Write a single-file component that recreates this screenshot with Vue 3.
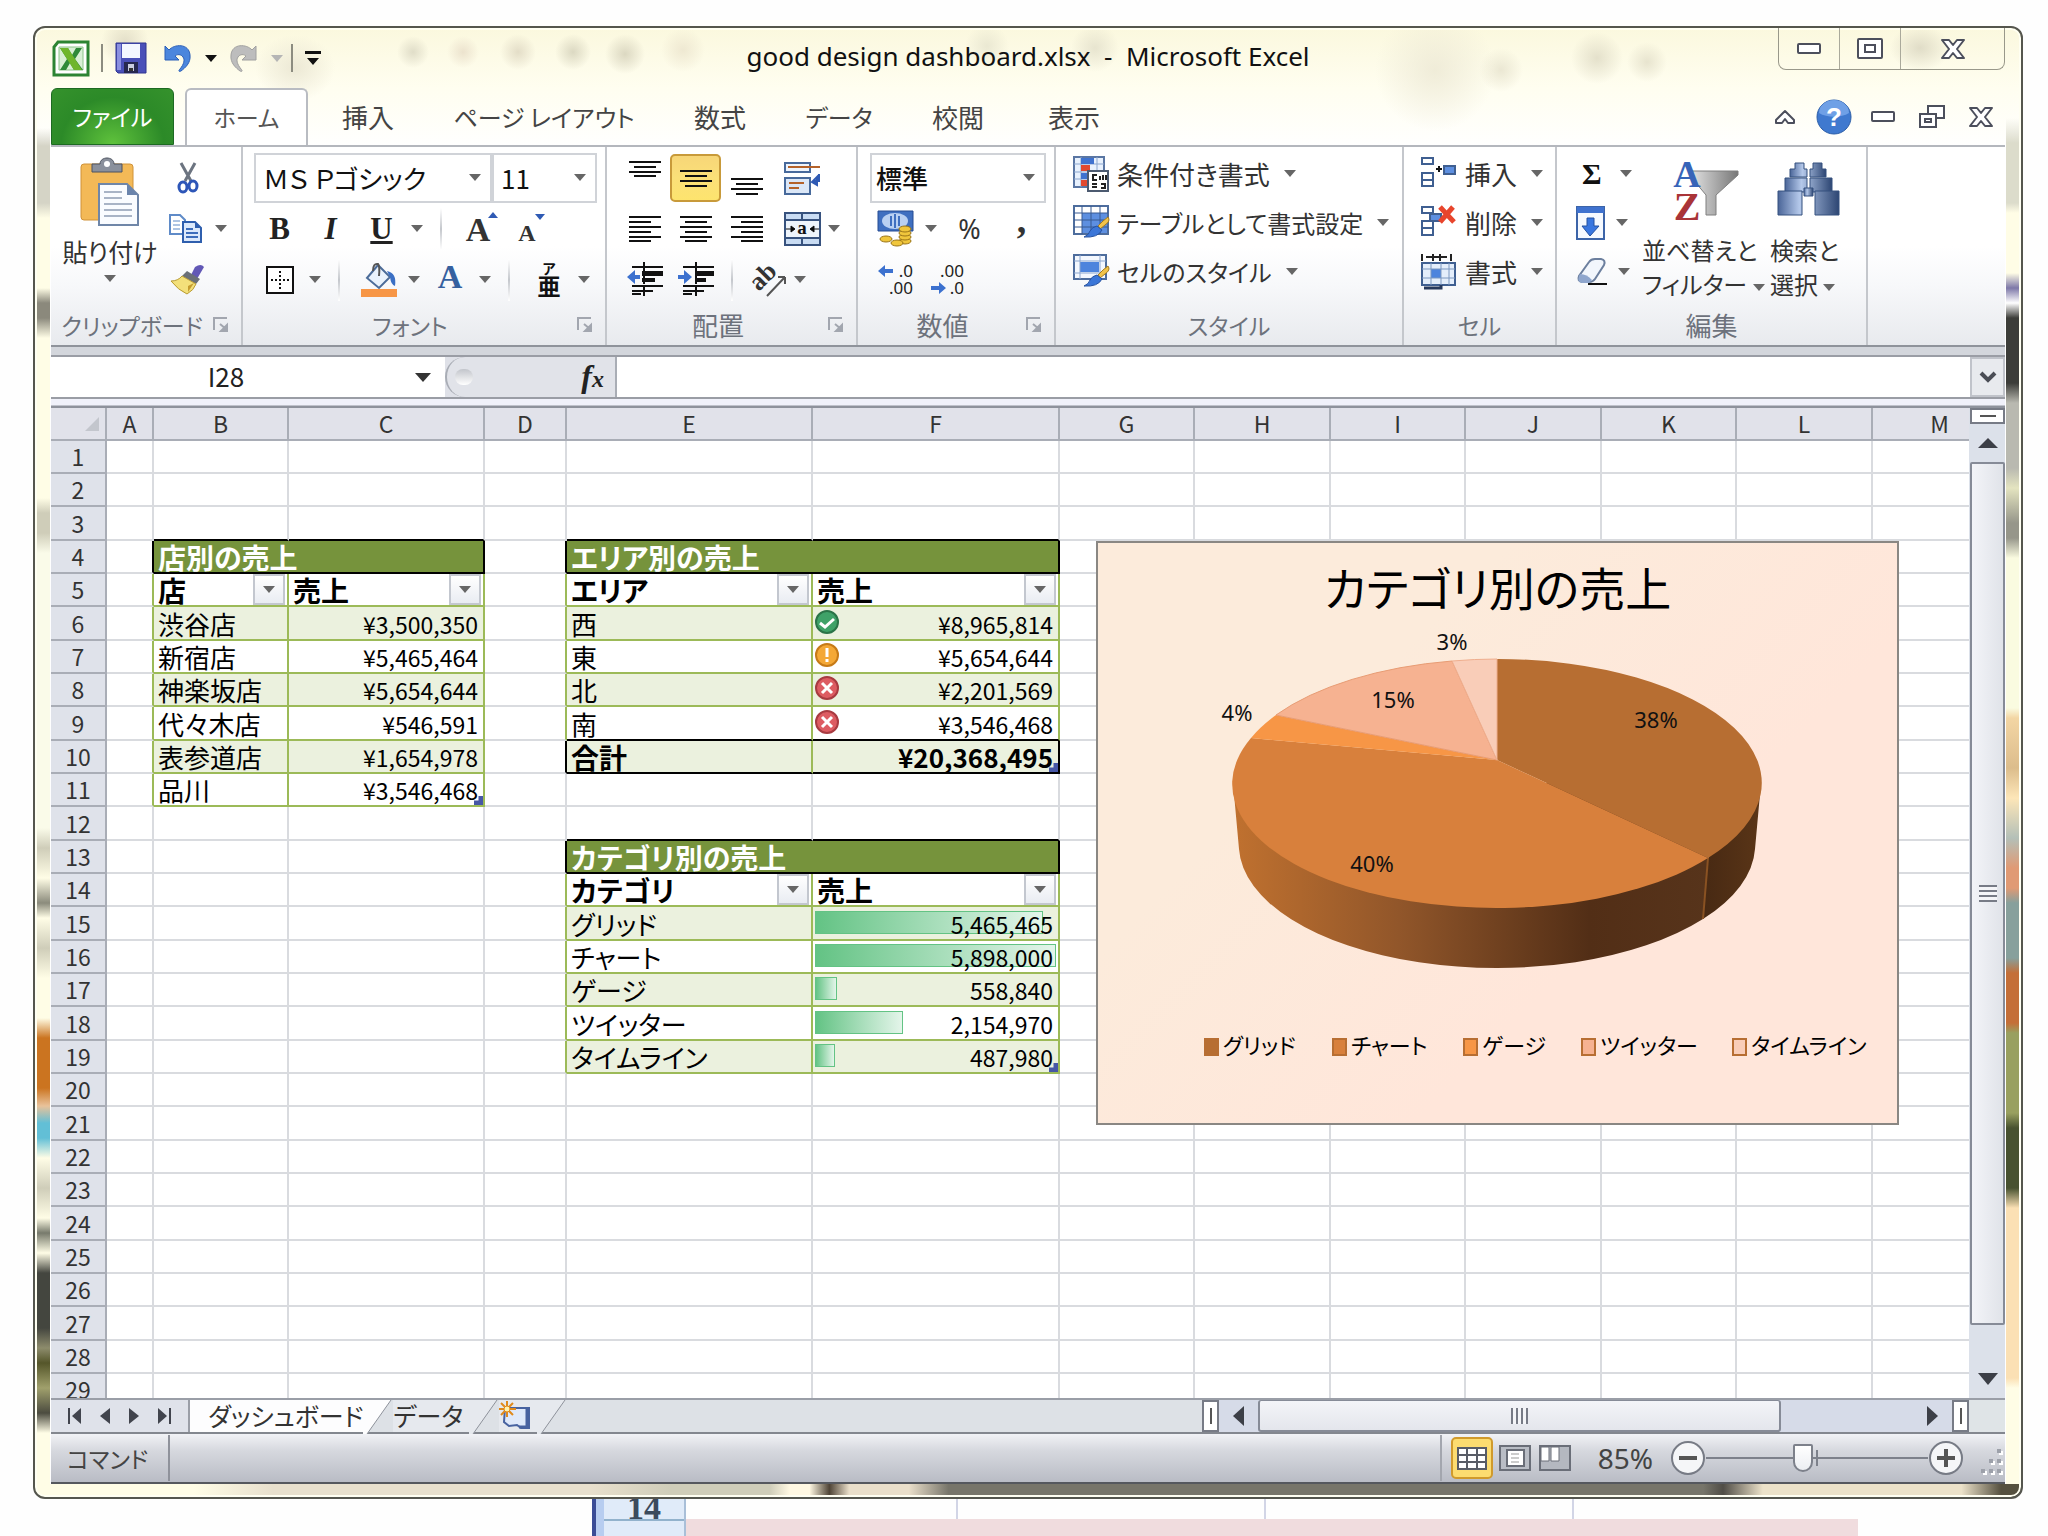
<script setup>
import { h } from 'vue'

const glyphs = {
  excel: '<path d="M5 1H35V34H1V6z" fill="#fff" stroke="#2c8433" stroke-width="3"/><path d="M6 6H30V29H6z" fill="#d9efd6" stroke="#8cc48a"/><path d="M7 7h8l4 7 4-7h6l-7 11 8 11h-9l-4-7-4 7H7l7-11z" fill="#2f8a3a"/><path d="M7 7h8l14 22h-8z" fill="#6fb52c"/>',
  save: '<path d="M1 1H31V31H3L1 29z" fill="#4a50b8" stroke="#2f3590"/><path d="M2 2h4v26H2z" fill="#8b90e0"/><path d="M7 2H25V16H7z" fill="#f4f7ff"/><path d="M9 20H23V31H9z" fill="#26284f"/><path d="M13 22h6v7h-6z" fill="#c9ccdf"/><path d="M14 26h4v3h-4z" fill="#333"/>',
  undo: '<path d="M1 3l4 4C10 1 25 0 26 12c1 8-5 13-9 16-2 1-3 0-1-2 4-5 5-9 3-12-2-3-6-3-8-1l4 4H1z" fill="#4b86dd" stroke="#2b5fb8"/>',
  redo: '<path d="M26 3l-4 4C17 1 2 0 1 12c-1 8 5 13 9 16 2 1 3 0 1-2-4-5-5-9-3-12 2-3 6-3 8-1l-4 4h14z" fill="#bdbdbd" stroke="#a0a0a0"/>',
  more: '<path d="M0 0H16V3H0z M2 7H14L8 14z" fill="#111"/>',
  min: '<rect x="1" y="1" width="22" height="9" rx="1" fill="#fff" stroke="#4c4f5c" stroke-width="2"/>',
  max: '<rect x="1" y="1" width="24" height="19" rx="1" fill="#fff" stroke="#4c4f5c" stroke-width="2"/><rect x="8" y="7" width="10" height="7" fill="#fff" stroke="#4c4f5c" stroke-width="2"/>',
  close: '<path d="M1 1h7l4 5 4-5h7l-7 9 7 9h-7l-4-5-4 5H1l7-9z" fill="#fff" stroke="#4c4f5c" stroke-width="2" stroke-linejoin="round"/>',
  restore: '<path d="M9 1H25V13H9z" fill="#fff" stroke="#4c4f5c" stroke-width="2"/><path d="M1 9H17V22H1z" fill="#fff" stroke="#4c4f5c" stroke-width="2"/><path d="M6 14h6v3H6z" fill="#fff" stroke="#4c4f5c" stroke-width="2"/>',
  caret: '<path d="M1 14V11L10 2L19 11V14H13L10 10L7 14z" fill="#fff" stroke="#4c4f5c" stroke-width="2" stroke-linejoin="round"/>',
  help: '<circle cx="18" cy="18" r="17" fill="#3f79cf" stroke="#2c5ea8"/><path d="M3 14a15 13 0 0 1 30 0c-8 5-22 5-30 0z" fill="#6fa0e6"/><text x="18" y="27" text-anchor="middle" font-family="Liberation Sans" font-weight="bold" font-size="26" fill="#fff">?</text>',
  paste: '<rect x="1" y="6" width="52" height="56" rx="3" fill="#f3b957" stroke="#d09238"/><path d="M12 6h8c0-8 14-8 14 0h8v8H12z" fill="#8a909c" stroke="#4d5360"/><circle cx="27" cy="6" r="3" fill="#fff"/><path d="M19 26H47L58 37V67H19z" fill="#fafcff" stroke="#6f86a8" stroke-width="2"/><path d="M47 26V37H58z" fill="#6a84ac"/><path d="M24 34h18M24 40h18M24 46h28M24 52h28M24 58h28" stroke="#a9b4c6" stroke-width="2"/>',
  cut: '<path d="M4 1L14 19M18 1L8 19" stroke="#6c7480" stroke-width="3"/><ellipse cx="6" cy="25" rx="4" ry="5" fill="none" stroke="#2d56b8" stroke-width="3"/><ellipse cx="16" cy="24" rx="4" ry="5" fill="none" stroke="#2d56b8" stroke-width="3"/>',
  copy: '<path d="M1 1H11L16 6V20H1z" fill="#fff" stroke="#5f8bc8" stroke-width="2"/><path d="M4 7h7M4 11h7M4 15h7" stroke="#5f8bc8"/><path d="M14 8H26L32 14V28H14z" fill="#dce9fb" stroke="#2f5fae" stroke-width="2"/><path d="M26 8V14H32z" fill="#2f5fae"/><path d="M17 15h7M17 19h12M17 23h12" stroke="#3d6dbb" stroke-width="2"/>',
  brush: '<path d="M25 3q6-4 9 0l-7 12-6-4z" fill="#6258b6"/><path d="M17 7L30 15 26 20 12 12z" fill="#6b7077"/><path d="M12 12L26 20Q24 26 17 30 8 26 1 17 8 17 12 12z" fill="#f3e07a" stroke="#b99b32"/><path d="M18 22l6-3-6 9z" fill="#c59d2f"/>',
  border: '<path d="M1 1H27V27H1z" fill="#fff" stroke="#111" stroke-width="2"/><path d="M14 5V24M5 14H24" stroke="#111" stroke-width="2" stroke-dasharray="2 2"/>',
  fill: '<path d="M0 26H36V34H0z" fill="#f79646"/><path d="M17 2L29 14 18 25 6 15z" fill="#e9f2fc" stroke="#4c6c99" stroke-width="2"/><path d="M12 8q0-8 5-7 2 2 1 12" fill="none" stroke="#555" stroke-width="2"/><path d="M26 8q10 2 8 15-4-1-5-9z" fill="#3b6fc4"/>',
  fontcolor: '<text x="13" y="25" text-anchor="middle" font-family="Liberation Serif" font-weight="bold" font-size="34" fill="#35609f">A</text>',
  grow: '<text x="15" y="30" text-anchor="middle" font-family="Liberation Serif" font-weight="bold" font-size="34" fill="#333">A</text><path d="M25 7L30 1L35 7z" fill="#2f5ab4"/>',
  shrink: '<text x="11" y="30" text-anchor="middle" font-family="Liberation Serif" font-weight="bold" font-size="24" fill="#333">A</text><path d="M19 3H29L24 9z" fill="#2f5ab4"/>',
  ruby: '<text x="13" y="12" text-anchor="middle" font-family="Noto Sans CJK JP" font-weight="bold" font-size="14" fill="#111">ア</text><text x="13" y="33" text-anchor="middle" font-family="Noto Sans CJK JP" font-weight="bold" font-size="23" fill="#111">亜</text>',
  vtop: '<path d="M0 3H32M5 8H27M0 13H32M5 17H27" stroke="#111" stroke-width="2"/>',
  vmid: '<path d="M0 12H32M5 17H27M0 22H32M5 27H27" stroke="#111" stroke-width="2"/>',
  vbot: '<path d="M0 20H32M5 25H27M0 30H32M5 35H27" stroke="#111" stroke-width="2"/>',
  hleft: '<path d="M0 7H32M0 12H22M0 17H32M0 22H22M0 27H32M0 31H22" stroke="#111" stroke-width="2"/>',
  hmid: '<path d="M0 7H32M5 12H27M0 17H32M5 22H27M0 27H32M5 31H27" stroke="#111" stroke-width="2"/>',
  hright: '<path d="M0 7H32M10 12H32M0 17H32M10 22H32M0 27H32M10 31H32" stroke="#111" stroke-width="2"/>',
  wrap: '<path d="M1 2H26V11H1z" fill="#eef4fc" stroke="#47699b" stroke-width="2"/><path d="M4 6H36" stroke="#b4622a" stroke-width="2"/><path d="M1 17H26V33H1z" fill="#dbe7f7" stroke="#47699b" stroke-width="2"/><path d="M5 22H20M5 27H15" stroke="#b4622a" stroke-width="2"/><path d="M35 13V20H30M33 16L28 21l5 3z" fill="#2f5ab4" stroke="#2f5ab4" stroke-width="2"/>',
  merge: '<path d="M1 1H36V33H1z" fill="#c9dcf3" stroke="#37527e" stroke-width="2"/><path d="M1 8H36M1 26H36M18 1V8M18 26V33" stroke="#37527e" stroke-width="2"/><path d="M2 9H35V25H2z" fill="#eef4fb"/><path d="M2 17H9M28 17H35M7 14l4 3-4 3zM30 14l-4 3 4 3z" stroke="#111" stroke-width="1"/><text x="18" y="22" text-anchor="middle" font-family="Liberation Serif" font-weight="bold" font-size="19" fill="#111">a</text>',
  outdent: '<path d="M5 5H36M5 24H36M5 29H26M5 32H14" stroke="#111" stroke-width="2"/><path d="M15 9H36V14H15zM15 16H28V20H15z" fill="#111"/><path d="M17 0V35" stroke="#111" stroke-width="2" stroke-dasharray="4 2"/><path d="M0 15L8 8V13H13V17H8V22z" fill="#3c71cf"/>',
  indent: '<path d="M5 5H36M5 24H36M5 29H26M5 32H14" stroke="#111" stroke-width="2"/><path d="M17 9H36V14H17zM17 16H28V20H17z" fill="#111"/><path d="M18 0V35" stroke="#111" stroke-width="2" stroke-dasharray="4 2"/><path d="M14 15L6 8V13H0V17H6V22z" fill="#3c71cf"/>',
  orient: '<g transform="rotate(-45 16 16)"><text x="14" y="20" text-anchor="middle" font-family="Liberation Serif" font-weight="bold" font-size="26" fill="#333">ab</text></g><path d="M16 34L34 15M34 15H27M34 15V22" fill="none" stroke="#555" stroke-width="2"/>',
  money: '<path d="M1 1H36V21H1z" fill="#3f6fc0" stroke="#274d92"/><ellipse cx="18" cy="11" rx="13" ry="8" fill="#b9d0f2"/><path d="M14 6v10M22 6v10M18 4v14" stroke="#3f6fc0" stroke-width="2"/><g fill="#f0c63c" stroke="#9a7416"><ellipse cx="28" cy="31" rx="6" ry="3"/><ellipse cx="28" cy="27" rx="6" ry="3"/><ellipse cx="28" cy="23" rx="6" ry="3"/><ellipse cx="28" cy="19" rx="6" ry="3"/><ellipse cx="9" cy="29" rx="6" ry="3"/><ellipse cx="20" cy="33" rx="6" ry="3"/></g>',
  incdec: '<text x="35" y="13" text-anchor="end" font-family="Noto Sans" font-size="17" fill="#222">.0</text><text x="35" y="30" text-anchor="end" font-family="Noto Sans" font-size="17" fill="#222">.00</text><path d="M0 7L7 1V5H15V9H7V13z" fill="#3c71cf"/>',
  decdec: '<text x="35" y="13" text-anchor="end" font-family="Noto Sans" font-size="17" fill="#222">.00</text><text x="35" y="30" text-anchor="end" font-family="Noto Sans" font-size="17" fill="#222">.0</text><path d="M17 24L10 18V22H2V26H10V30z" fill="#3c71cf"/>',
  cond: '<path d="M1 1H31V31H1z" fill="#e8f1fd" stroke="#5a76a3" stroke-width="2"/><path d="M8 1V31M1 8H31M1 16H31M1 23H31M24 1V14" stroke="#8ba6cf"/><path d="M8 2H21V8H8z" fill="#3f72cf"/><path d="M8 9H17V15H8zM8 24H14V30H8z" fill="#e2492f"/><path d="M8 17H14V23H8z" fill="#3f72cf"/><path d="M15 15H35V35H15z" fill="#fff" stroke="#4c5a70" stroke-width="2"/><path d="M24 19H20V24H24M27 20V24M30 19V24M33 19V24M19 28H24M19 31H24M28 28H32V32H28" fill="none" stroke="#222" stroke-width="2"/>',
  tblfmt: '<path d="M1 1H35V29H1z" fill="#fff" stroke="#4e6d9d" stroke-width="2"/><path d="M9 8H34V28H9z" fill="#5d8fe0"/><path d="M1 8H35M1 15H35M1 22H35M9 1V29M18 1V29M27 1V29" stroke="#385a92" stroke-width="1"/><path d="M35 12q3 4-3 8l-5 4-2-3 5-5z" fill="#f1c34a" stroke="#a67c1d"/><path d="M24 21l5 4q-4 8-18 7 5-2 6-6 2-4 7-5z" fill="#3b76d8" stroke="#2753a2"/>',
  celfmt: '<path d="M1 1H33V25H1z" fill="#f4f8fe" stroke="#4e6d9d" stroke-width="2"/><path d="M7 8H26V18H7z" fill="#4d84dd"/><path d="M1 7H33M1 19H33M7 1V25M27 1V25" stroke="#8ba6cf"/><path d="M35 12q3 4-3 8l-5 4-2-3 5-5z" fill="#f1c34a" stroke="#a67c1d"/><path d="M24 21l5 4q-4 8-18 7 5-2 6-6 2-4 7-5z" fill="#3b76d8" stroke="#2753a2"/>',
  cins: '<g fill="#fff" stroke="#3f5f91" stroke-width="2"><path d="M1 2H12V8H1zM1 17H12V24H1zM1 24H12V30H1z"/><path d="M23 10H34V18H23z" fill="#5d8fe0"/></g><path d="M15 13H21M18 10V16" stroke="#111" stroke-width="2"/>',
  cdel: '<g fill="#fff" stroke="#3f5f91" stroke-width="2"><path d="M1 2H12V8H1zM1 16H12V23H1zM1 23H12V30H1z"/><path d="M9 9H20V16H9z" fill="#5d8fe0"/></g><path d="M19 2L33 17M32 2L19 17" stroke="#e8452c" stroke-width="5"/>',
  cfmt: '<path d="M1 0V7M30 0V7M5 3H26M12 0V7M19 0V7" stroke="#222" stroke-width="2"/><path d="M1 9H34V31H1z" fill="#e4eefb" stroke="#3f5f91" stroke-width="2"/><path d="M10 15H20V24H10z" fill="#4d84dd"/><path d="M1 15H34M1 24H34M10 9V31M20 9V31M28 9V31" stroke="#7d98c0"/><path d="M3 34H20V31" fill="none" stroke="#26395c" stroke-width="3"/>',
  down: '<path d="M1 1H28V33H1z" fill="#f5f9ff" stroke="#3c64a8" stroke-width="2"/><path d="M1 1H28V7H1z" fill="#3f72cf"/><path d="M11 12H18V20H23L14 30L6 20H11z" fill="#3876e0" stroke="#2350a0"/>',
  eraser: '<path d="M13 4q2-3 6-3h6q5 1 3 6l-9 14q-2 3-6 3H6q-5-1-3-6z" fill="#f2f6fc" stroke="#6c7f9e" stroke-width="2"/><path d="M4 16q7 0 12 6l-3 3H6q-5-1-3-7z" fill="#8fa6cd"/><path d="M12 26H31" stroke="#111" stroke-width="2"/>',
  sort: '<defs><linearGradient id="fn"><stop offset="0" stop-color="#e2e2e2"/><stop offset="1" stop-color="#777"/></linearGradient></defs><path d="M18 14H65V18L43 38V58H33V38L18 20z" fill="url(#fn)" stroke="#7f7f7f"/><text x="14" y="30" text-anchor="middle" font-family="Liberation Serif" font-weight="bold" font-size="38" fill="#3764b8">A</text><text x="14" y="63" text-anchor="middle" font-family="Liberation Serif" font-weight="bold" font-size="40" fill="#a93438">Z</text>',
  find: '<defs><linearGradient id="bn"><stop offset="0" stop-color="#4a6598"/><stop offset=".35" stop-color="#b4c8ea"/><stop offset="1" stop-color="#2d4673"/></linearGradient></defs><g transform="translate(0 5)" fill="url(#bn)" stroke="#34507f"><path d="M18 1h9v6h3v8H13V7h5zM36 1h9v6h4v8H33V7h3z"/><path d="M8 16H30V30H8zM33 16H55V30H33z"/><path d="M27 26H36V34H27z"/><path d="M1 29H25V53H1zM38 29H62V53H38z"/></g>',
  launch: '<path d="M1 13V1H14" fill="none" stroke="#a2a6af" stroke-width="2"/><path d="M7 7L13 12M14 8V14H8z" fill="#a2a6af" stroke="#a2a6af" stroke-width="2"/>',
  first: '<path d="M1 0H3V16H1zM14 0V16L5 8z" fill="#41444d"/>',
  prev: '<path d="M10 0V16L0 8z" fill="#41444d"/>',
  next: '<path d="M0 0V16L10 8z" fill="#41444d"/>',
  last: '<path d="M11 0H13V16H11zM0 0V16L9 8z" fill="#41444d"/>',
  newtab: '<path d="M6 8H30V28H22L18 25 10 26 5 22z" fill="#dfe9fa" stroke="#4863a0" stroke-width="2"/><path d="M28 9V27H20" fill="none" stroke="#4863a0" stroke-width="3"/><path d="M8 1V17M0 9H17M2 3L14 15M14 3L2 15" stroke="#e08a1c" stroke-width="2"/><circle cx="8" cy="9" r="3" fill="#fff3b0" stroke="#e08a1c"/>',
  vnormal: '<path d="M1 1H29V22H1z" fill="#fff" stroke="#585c66" stroke-width="2"/><path d="M1 8H29M1 15H29M10 1V22M20 1V22" stroke="#585c66" stroke-width="2"/>',
  vlayout: '<path d="M1 1H31V25H1z" fill="#b9bdc5" stroke="#6a6e78" stroke-width="2"/><path d="M8 5H25V21H8z" fill="#fff" stroke="#6a6e78" stroke-width="2"/><path d="M12 9H20M12 13H20M12 17H20" stroke="#999"/>',
  vbreak: '<path d="M1 1H31V25H1z" fill="#b4b8c0" stroke="#6a6e78" stroke-width="2"/><path d="M2 2H10V16H2zM12 2H20V16H12z" fill="#fff" stroke="#6a6e78"/>',
  minus: '<circle cx="18" cy="18" r="16" fill="#f5f6f8" stroke="#777b85" stroke-width="2"/><path d="M9 18H27" stroke="#555" stroke-width="4"/>',
  plus: '<circle cx="18" cy="18" r="16" fill="#f5f6f8" stroke="#777b85" stroke-width="2"/><path d="M9 18H27M18 9V27" stroke="#555" stroke-width="4"/>',
  ok: '<circle cx="12" cy="12" r="11" fill="#3fa268" stroke="#2b7448" stroke-width="2"/><path d="M5 13l5 4 9-8" fill="none" stroke="#fff" stroke-width="3"/>',
  warn: '<circle cx="12" cy="12" r="11" fill="#f4a836" stroke="#c67a17" stroke-width="2"/><path d="M12 5V14M12 16V19" stroke="#fff" stroke-width="3"/>',
  bad: '<circle cx="12" cy="12" r="11" fill="#dd5c62" stroke="#a83b41" stroke-width="2"/><path d="M7 7L17 17M17 7L7 17" stroke="#fff" stroke-width="3"/>',
  slant: '<path d="M0 0H28L4 34H0z" fill="#fdfdfe"/><path d="M28 0L4 34" stroke="#8e929b" stroke-width="1"/>',
  slant2: '<path d="M0 0H28L4 34H0z" fill="#e6e9ee"/><path d="M28 0L4 34" stroke="#8e929b" stroke-width="1"/>',
  grip: '<g fill="#fff"><path d="M18 2h4v4h-4zM10 12h4v4h-4zM18 12h4v4h-4zM2 22h4v4H2zM10 22h4v4h-4zM18 22h4v4h-4z"/></g><g fill="#9da1aa"><path d="M16 0h4v4h-4zM8 10h4v4H8zM16 10h4v4h-4zM0 20h4v4H0zM8 20h4v4H8zM16 20h4v4h-4z"/></g>',
}
const Icon = (p) => h('svg', { width: p.w, height: p.h, viewBox: `0 0 ${p.w} ${p.h}`, 'aria-hidden': 'true', innerHTML: glyphs[p.n] })
Icon.props = ['n', 'w', 'h']

const docTitle = 'good design dashboard.xlsx  -  Microsoft Excel'
const tabs = [['挿入', ''], ['ページ レイアウト', 'kana wide'], ['数式', ''], ['データ', 'kana data'], ['校閲', ''], ['表示', '']]
const styleCmds = [['cond', '条件付き書式', ''], ['tblfmt', 'テーブルとして書式設定', 'kana'], ['celfmt', 'セルのスタイル', 'kana']]
const cellCmds = [['cins', '挿入'], ['cdel', '削除'], ['cfmt', '書式']]

const cols = 'ABCDEFGHIJKLM'.split('')
const rows = Array.from({ length: 29 }, (_, i) => i + 1)
const cells = {
  B4: { title: '店別の売上' }, B5: { head: '店' }, C5: { head: '売上' },
  B6: { t: '渋谷店' }, C6: { num: '¥3,500,350' },
  B7: { t: '新宿店' }, C7: { num: '¥5,465,464' },
  B8: { t: '神楽坂店' }, C8: { num: '¥5,654,644' },
  B9: { t: '代々木店' }, C9: { num: '¥546,591' },
  B10: { t: '表参道店' }, C10: { num: '¥1,654,978' },
  B11: { t: '品川' }, C11: { num: '¥3,546,468', end: true },
  E4: { title: 'エリア別の売上' }, E5: { head: 'エリア' }, F5: { head: '売上' },
  E6: { t: '西' }, F6: { num: '¥8,965,814', mark: 'ok' },
  E7: { t: '東' }, F7: { num: '¥5,654,644', mark: 'warn' },
  E8: { t: '北' }, F8: { num: '¥2,201,569', mark: 'bad' },
  E9: { t: '南' }, F9: { num: '¥3,546,468', mark: 'bad' },
  E10: { t: '合計', bold: true }, F10: { num: '¥20,368,495', bold: true, end: true },
  E13: { title: 'カテゴリ別の売上' }, E14: { head: 'カテゴリ' }, F14: { head: '売上' },
  E15: { t: 'グリッド' }, F15: { num: '5,465,465', bar: 93 },
  E16: { t: 'チャート' }, F16: { num: '5,898,000', bar: 100 },
  E17: { t: 'ゲージ' }, F17: { num: '558,840', bar: 9 },
  E18: { t: 'ツイッター' }, F18: { num: '2,154,970', bar: 36 },
  E19: { t: 'タイムライン' }, F19: { num: '487,980', bar: 8, end: true },
}
const areas = [
  { c0: 1, c1: 2, r0: 4, r1: 11 },
  { c0: 4, c1: 5, r0: 4, r1: 10, total: true },
  { c0: 4, c1: 5, r0: 13, r1: 19 },
]
const cell = (r, c) => cells[cols[c] + r] || {}
const covered = (r, c) => c > 0 && !!cell(r, c - 1).title
function cellClass(r, c) {
  const out = []
  for (const a of areas) {
    const inRows = r >= a.r0 && r <= a.r1
    const inCols = c >= a.c0 && c <= a.c1
    const last = a.total && r === a.r1
    if (inRows && c >= a.c0 - 1 && c <= a.c1) {
      const outer = c === a.c0 - 1 || c === a.c1
      out.push(r === a.r0 || (last && outer) ? 'rk' : 'rg')
    }
    if (inCols && r >= a.r0 - 1 && r <= a.r1) {
      out.push(r <= a.r0 || last || (a.total && r === a.r1 - 1) ? 'bk' : 'bg')
    }
    if (inRows && inCols && r > a.r0 + 1 && (r - a.r0) % 2 === 0) out.push('band')
  }
  if (cell(r, c).title) out.push('title')
  return out
}
const legend = [['グリッド', '#b76e32'], ['チャート', '#d8803c'], ['ゲージ', '#f79646'], ['ツイッター', '#f6b291'], ['タイムライン', '#f9cdb8']]
</script>

<template>
  <div class="desktop">
    <main class="window">
      <header class="titlebar">
        <div class="qat">
          <Icon n="excel" w="36" h="35" />
          <i class="vline"></i>
          <button aria-label="上書き保存"><Icon n="save" w="32" h="32" /></button>
          <button aria-label="元に戻す"><Icon n="undo" w="28" h="30" /></button>
          <i class="dn black"></i>
          <button aria-label="やり直し"><Icon n="redo" w="28" h="30" /></button>
          <i class="dn pale"></i>
          <i class="vline"></i>
          <button aria-label="クイック アクセス ツール バーのカスタマイズ"><Icon n="more" w="16" h="14" /></button>
        </div>
        <h1>{{ docTitle }}</h1>
        <div class="winbtns">
          <button aria-label="最小化"><Icon n="min" w="24" h="11" /></button>
          <button aria-label="最大化"><Icon n="max" w="26" h="21" /></button>
          <button aria-label="閉じる" class="x"><Icon n="close" w="24" h="20" /></button>
        </div>
      </header>

      <nav class="tabs">
        <button class="file">ファイル</button>
        <button class="home">ホーム</button>
        <button v-for="t in tabs" :key="t[0]" class="tab" :class="t[1]">{{ t[0] }}</button>
        <div class="docbtns">
          <button aria-label="リボンの最小化"><Icon n="caret" w="20" h="15" /></button>
          <button aria-label="ヘルプ"><Icon n="help" w="36" h="36" /></button>
          <button aria-label="ウィンドウの最小化"><Icon n="min" w="24" h="11" /></button>
          <button aria-label="ウィンドウを元に戻す"><Icon n="restore" w="26" h="23" /></button>
          <button aria-label="ウィンドウを閉じる"><Icon n="close" w="24" h="20" /></button>
        </div>
      </nav>

      <section class="ribbon">
        <div class="group clip">
          <div class="clipbody">
            <button class="big">
              <Icon n="paste" w="60" h="70" /><span>貼り付け</span><i class="dn"></i>
            </button>
            <div class="stack">
              <button aria-label="切り取り"><Icon n="cut" w="22" h="32" /></button>
              <button aria-label="コピー"><Icon n="copy" w="34" h="30" /><i class="dn"></i></button>
              <button aria-label="書式のコピー"><Icon n="brush" w="36" h="32" /></button>
            </div>
          </div>
          <footer class="kana"><span>クリップボード</span><Icon n="launch" w="17" h="17" /></footer>
        </div>

        <div class="group font">
          <div class="row combos">
            <label class="combo fname"><select aria-label="フォント"><option>ＭＳ Ｐゴシック</option></select><i class="dn"></i></label>
            <label class="combo fsize"><select aria-label="フォント サイズ"><option>11</option></select><i class="dn"></i></label>
          </div>
          <div class="row">
            <button class="cell serif"><b>B</b></button>
            <button class="cell serif"><em>I</em></button>
            <button class="cell serif"><u>U</u></button>
            <button class="drop" aria-label="下線の種類"><i class="dn"></i></button>
            <i class="sep"></i>
            <button class="cell" aria-label="フォント サイズの拡大"><Icon n="grow" w="36" h="36" /></button>
            <button class="cell" aria-label="フォント サイズの縮小"><Icon n="shrink" w="32" h="36" /></button>
          </div>
          <div class="row">
            <button class="cell" aria-label="罫線"><Icon n="border" w="28" h="28" /></button>
            <button class="drop" aria-label="罫線の種類"><i class="dn"></i></button>
            <i class="sep"></i>
            <button class="cell" aria-label="塗りつぶしの色"><Icon n="fill" w="36" h="34" /></button>
            <button class="drop" aria-label="塗りつぶしの色の選択"><i class="dn"></i></button>
            <button class="cell" aria-label="フォントの色"><Icon n="fontcolor" w="26" h="34" /></button>
            <button class="drop" aria-label="フォントの色の選択"><i class="dn"></i></button>
            <i class="sep"></i>
            <button class="cell" aria-label="ふりがなの表示"><Icon n="ruby" w="26" h="36" /></button>
            <button class="drop" aria-label="ふりがなの設定"><i class="dn"></i></button>
          </div>
          <footer class="kana"><span>フォント</span><Icon n="launch" w="17" h="17" /></footer>
        </div>

        <div class="group align">
          <div class="row">
            <button class="cell" aria-label="上揃え"><Icon n="vtop" w="32" h="38" /></button>
            <button class="cell on" aria-label="上下中央揃え"><Icon n="vmid" w="32" h="38" /></button>
            <button class="cell" aria-label="下揃え"><Icon n="vbot" w="32" h="38" /></button>
            <button class="cell mid" aria-label="折り返して全体を表示する"><Icon n="wrap" w="37" h="34" /></button>
          </div>
          <div class="row">
            <button class="cell" aria-label="左揃え"><Icon n="hleft" w="32" h="38" /></button>
            <button class="cell" aria-label="中央揃え"><Icon n="hmid" w="32" h="38" /></button>
            <button class="cell" aria-label="右揃え"><Icon n="hright" w="32" h="38" /></button>
            <button class="cell mid" aria-label="セルを結合して中央揃え"><Icon n="merge" w="37" h="34" /></button>
            <i class="dn"></i>
          </div>
          <div class="row">
            <button class="cell" aria-label="インデントを減らす"><Icon n="outdent" w="36" h="35" /></button>
            <button class="cell" aria-label="インデントを増やす"><Icon n="indent" w="36" h="35" /></button>
            <i class="sep"></i>
            <button class="cell" aria-label="方向"><Icon n="orient" w="36" h="36" /></button>
            <i class="dn"></i>
          </div>
          <footer><span>配置</span><Icon n="launch" w="17" h="17" /></footer>
        </div>

        <div class="group number">
          <div class="row combos">
            <label class="combo nfmt"><select aria-label="数値の書式"><option>標準</option></select><i class="dn"></i></label>
          </div>
          <div class="row">
            <button class="cell" aria-label="通貨表示形式"><Icon n="money" w="37" h="37" /></button>
            <button class="drop" aria-label="通貨の選択"><i class="dn"></i></button>
            <button class="cell pct">%</button>
            <button class="cell comma">,</button>
          </div>
          <div class="row">
            <button class="cell" aria-label="小数点以下の表示桁数を増やす"><Icon n="incdec" w="36" h="32" /></button>
            <button class="cell" aria-label="小数点以下の表示桁数を減らす"><Icon n="decdec" w="36" h="32" /></button>
          </div>
          <footer><span>数値</span><Icon n="launch" w="17" h="17" /></footer>
        </div>

        <div class="group list styles">
          <button v-for="s in styleCmds" :key="s[1]" :class="s[2]"><Icon :n="s[0]" w="36" h="36" /><span>{{ s[1] }}</span><i class="dn"></i></button>
          <footer class="kana"><span>スタイル</span></footer>
        </div>
        <div class="group list cellsg">
          <button v-for="s in cellCmds" :key="s[1]"><Icon :n="s[0]" w="36" h="36" /><span>{{ s[1] }}</span><i class="dn"></i></button>
          <footer class="kana"><span>セル</span></footer>
        </div>
        <div class="group edit">
          <div class="editbody">
            <div class="small">
              <button class="sigma">Σ<i class="dn"></i></button>
              <button aria-label="フィル"><Icon n="down" w="30" h="34" /><i class="dn"></i></button>
              <button aria-label="クリア"><Icon n="eraser" w="32" h="28" /><i class="dn"></i></button>
            </div>
            <button class="tall">
              <Icon n="sort" w="66" h="66" /><span>並べ替えと</span><span>フィルター <i class="dn"></i></span>
            </button>
            <button class="tall">
              <Icon n="find" w="63" h="66" /><span>検索と</span><span>選択 <i class="dn"></i></span>
            </button>
          </div>
          <footer><span>編集</span></footer>
        </div>
      </section>

      <section class="formulabar">
        <input class="namebox" aria-label="名前ボックス" value="I28" />
        <i class="dn"></i>
        <div class="fx"><i class="knob"></i><button><em>f</em><em class="sub">x</em></button></div>
        <input class="formula" aria-label="数式バー" />
        <button class="expand" aria-label="数式バーの展開">
          <svg width="18" height="12" viewBox="0 0 18 12"><path d="M2 2L9 9L16 2" fill="none" stroke="#4a4d55" stroke-width="4" /></svg>
        </button>
      </section>

      <section class="sheet">
        <div class="canvas">
          <table>
            <colgroup><col class="wr" /><col v-for="c in cols" :key="c" :class="'w' + c" /></colgroup>
            <thead>
              <tr>
                <th class="corner"><svg width="14" height="14" viewBox="0 0 14 14"><path d="M14 0V14H0z" fill="#c3c6cd" /></svg></th>
                <th v-for="c in cols" :key="c" scope="col">{{ c }}</th>
              </tr>
            </thead>
            <tbody>
              <tr v-for="r in rows" :key="r">
                <th scope="row">{{ r }}</th>
                <template v-for="(c, i) in cols" :key="c">
                  <td v-if="!covered(r, i)" :colspan="cell(r, i).title ? 2 : 1" :class="cellClass(r, i)">
                    <div v-if="cell(r, i).head" class="hd"><b>{{ cell(r, i).head }}</b><button :aria-label="cell(r, i).head + ' フィルター'"><i class="dn"></i></button></div>
                    <div v-else-if="cell(r, i).num" class="nm" :class="{ bold: cell(r, i).bold }">
                      <Icon v-if="cell(r, i).mark" :n="cell(r, i).mark" w="24" h="24" />
                      <i v-if="cell(r, i).bar" class="bar" :style="{ width: cell(r, i).bar + '%' }"></i>
                      <span>{{ cell(r, i).num }}</span>
                      <i v-if="cell(r, i).end" class="end"></i>
                    </div>
                    <div v-else-if="cell(r, i).t || cell(r, i).title" class="tx" :class="{ bold: cell(r, i).bold }">{{ cell(r, i).t || cell(r, i).title }}</div>
                  </td>
                </template>
              </tr>
            </tbody>
          </table>
          <figure class="chart">
            <figcaption>カテゴリ別の売上</figcaption>
            <svg class="pie" width="799" height="350" viewBox="2 90 799 350" role="img" aria-label="カテゴリ別の売上">
              <defs>
                <linearGradient id="side"><stop offset="0" stop-color="#c0712f" /><stop offset=".35" stop-color="#91562a" /><stop offset=".75" stop-color="#522e16" /><stop offset="1" stop-color="#57341b" /></linearGradient>
                <linearGradient id="side2"><stop offset="0" stop-color="#472913" /><stop offset="1" stop-color="#5a3517" /></linearGradient>
              </defs>
              <path d="M137 242L143 308A258 123 0 0 0 607 378L612 317L612 242z" fill="url(#side)" />
              <path d="M612 317L607 378A258 123 0 0 0 659 308L665 242z" fill="url(#side2)" />
              <path d="M612 317L607 378" stroke="#8a5222" stroke-width="2" />
              <path d="M401 219L401 118A264 124 0 0 1 612 317z" fill="#b76e32" />
              <path d="M401 219L612 317A264 124 0 0 1 155 197z" fill="#d8803c" />
              <path d="M401 219L155 197A264 124 0 0 1 180 174z" fill="#f79646" />
              <path d="M401 219L180 174A264 124 0 0 1 356 120z" fill="#f6b291" stroke="#e89c74" />
              <path d="M401 219L356 120A264 124 0 0 1 401 118z" fill="#f9cdb8" stroke="#efae8e" />
              <g font-family="Noto Sans" font-size="22" text-anchor="middle" fill="#111">
                <text x="560" y="187">38%</text><text x="297" y="167">15%</text><text x="356" y="109">3%</text>
                <text x="141" y="180">4%</text><text x="276" y="331">40%</text>
              </g>
            </svg>
            <ul>
              <li v-for="l in legend" :key="l[0]"><i :style="{ background: l[1] }"></i>{{ l[0] }}</li>
            </ul>
          </figure>
        </div>
        <div class="vscroll">
          <i class="split"></i>
          <button aria-label="上へ"><i class="up"></i></button>
          <div class="vthumb"><i></i></div>
          <div class="vtrack"></div>
          <button aria-label="下へ"><i class="down"></i></button>
        </div>
      </section>

      <section class="sheetbar">
        <div class="nav">
          <button aria-label="先頭のシート"><Icon n="first" w="14" h="16" /></button>
          <button aria-label="前のシート"><Icon n="prev" w="10" h="16" /></button>
          <button aria-label="次のシート"><Icon n="next" w="10" h="16" /></button>
          <button aria-label="最後のシート"><Icon n="last" w="14" h="16" /></button>
        </div>
        <button class="stab active">ダッシュボード</button><Icon n="slant" w="30" h="34" />
        <button class="stab">データ</button><Icon n="slant2" w="30" h="34" />
        <button class="stab" aria-label="ワークシートの挿入"><Icon n="newtab" w="32" h="30" /></button><Icon n="slant2" w="30" h="34" />
        <div class="hscroll">
          <i class="hsplit"></i>
          <button aria-label="左へ"><i class="left"></i></button>
          <div class="hthumb"><i></i></div>
          <div class="htrack"></div>
          <button aria-label="右へ"><i class="right"></i></button>
          <i class="hsplit"></i>
        </div>
        <div class="hcorner"></div>
      </section>

      <footer class="status">
        <span class="mode">コマンド</span>
        <div class="views">
          <button class="on" aria-label="標準"><Icon n="vnormal" w="30" h="23" /></button>
          <button aria-label="ページ レイアウト"><Icon n="vlayout" w="32" h="26" /></button>
          <button aria-label="改ページ プレビュー"><Icon n="vbreak" w="32" h="26" /></button>
        </div>
        <span class="zoom">85%</span>
        <button aria-label="縮小"><Icon n="minus" w="36" h="36" /></button>
        <input type="range" min="0" max="100" value="43" aria-label="ズーム" />
        <button aria-label="拡大"><Icon n="plus" w="36" h="36" /></button>
        <Icon n="grip" w="24" h="28" />
      </footer>
    </main>

    <div class="behind">
      <span class="edge"></span>
      <div class="rowhead"><span>14</span><span></span></div>
      <div class="backgrid">
        <div class="lines"><i></i><i></i><i></i><i></i></div>
        <div class="pink"></div>
      </div>
    </div>
  </div>
</template>

<style>
body { background: #fefefe; }
</style>

<style scoped>
* { box-sizing: border-box; }
button, input, select { font: inherit; color: inherit; background: none; border: 0; padding: 0; margin: 0; border-radius: 0; outline: 0; }
button { display: flex; align-items: center; justify-content: center; white-space: nowrap; }
svg { display: block; flex: none; overflow: visible; }
.desktop {
  height: 100vh; overflow: hidden; display: flex; flex-direction: column;
  font-family: "Noto Sans CJK JP", "Noto Sans", sans-serif; font-feature-settings: "palt"; font-size: 26px; color: #333; line-height: 1;
}
.window {
  flex: 1; min-height: 0; margin: 26px 25px 0 33px; padding: 0 16px 13px; display: flex; flex-direction: column;
  border: 2px solid #55564e; border-radius: 12px; box-shadow: inset 0 0 0 2px #fffff2;
  background:
    linear-gradient(90deg, #fffde6 0 8%, #e8e0cd 12% 28%, #cfcdb9 32% 37%, #fff8e2 38% 39%, #4f4436 40%, #eadfca 41% 44%, #77756a 46% 84%, #504d46 85%, #ece2c9 87% 97%, #55503f 99%) bottom / 100% 13px no-repeat,
    linear-gradient(#fffde600 0 100px, #d5d4c6 118px 175px, #fffde6 190px 260px, #8b897c 275px 290px, #fffde6 310px 470px, #cfcdb9 485px 505px, #fafbe9 525px 800px, #cfcdb9 820px, #fffde6 850px, #8b8b7c 875px, #fffde6 890px, #cfcdb9 920px, #fffde6 950px 990px, #cb7420 1010px 1060px, #e9c29a 1078px, #62bfd6 1095px 1110px, #fffde6 1130px, #cfcdb9 1160px, #fffde6 1190px, #777a6c 1205px, #fffde6 1225px, #44463f 1245px 1300px, #8d8c6c 1320px, #55562a 1335px, #a0a06c 1360px, #4c4c40 1385px, #fffde6 1405px) left / 15px 100% no-repeat,
    linear-gradient(#fffde600 0 90px, #dcdccb 115px 175px, #fffde6 185px 245px, #7d78a8 260px, #fff 275px, #3c3d39 290px 355px, #b9b9b0 375px 440px, #e4e4c0 460px, #96968a 495px 510px, #fafbe0 530px 680px, #f3d6a4 690px, #dcbd8c 740px, #fde6b8 770px, #b4c0b8 810px, #e09a74 840px 860px, #87a09c 875px 930px, #c46f38 945px 995px, #99a060 1005px 1085px, #485230 1100px 1160px, #fbe0b4 1180px 1350px, #fffde6 1360px) right / 15px 100% no-repeat,
    radial-gradient(circle at 378px 24px, #d9d6c1cc, #fff0 16px), radial-gradient(circle at 428px 24px, #e8ddc8cc, #fff0 16px),
    radial-gradient(circle at 483px 24px, #ddd6c0cc, #fff0 18px), radial-gradient(circle at 538px 24px, #d3d0b9cc, #fff0 18px),
    radial-gradient(circle at 590px 26px, #d3cfb8cc, #fff0 20px), radial-gradient(circle at 648px 22px, #ebe4cdcc, #fff0 22px),
    radial-gradient(circle at 90px 14px, #ddd8c2cc, #fff0 24px), radial-gradient(ellipse at 260px 40px, #e8e4d0cc, #fff0 40px),
    radial-gradient(circle at 952px 18px, #e6e4cecc, #fff0 22px), radial-gradient(circle at 1060px 20px, #e2dfcacc, #fff0 24px),
    radial-gradient(ellipse at 1400px 42px, #ece8d4cc, #fff0 60px), radial-gradient(circle at 1466px 42px, #e6e2cdcc, #fff0 22px),
    radial-gradient(circle at 1562px 30px, #dedac4cc, #fff0 26px), radial-gradient(circle at 1612px 34px, #e2dec8cc, #fff0 20px),
    radial-gradient(ellipse at 1885px 20px, #d9d5c0cc, #fff0 30px),
    linear-gradient(#fbf8de, #fffef0 60px, #ffffff 120px);
  background-color: #fffde6;
}
.dn { width: 0; height: 0; flex: none; display: inline-block; border: 6px solid transparent; border-bottom: 0; border-top: 7px solid #666; }
.dn.black { border-top-color: #111; }
.dn.pale { border-top-color: #b5b5b5; }

.titlebar { height: 60px; display: grid; grid-template-columns: 1fr auto 1fr; }
.qat { display: flex; align-items: center; gap: 17px; padding-left: 2px; }
.qat .vline { width: 2px; height: 28px; background: #8c8c80; margin: 0 -5px; }
.qat .dn { margin: 0 -4px; }
.titlebar h1 { margin: 0; padding-top: 12px; font: 400 26px/32px "Noto Sans", sans-serif; color: #111; white-space: pre; }
.winbtns { justify-self: end; display: flex; height: 42px; border: 1px solid #99988a; border-top: 0; border-radius: 0 0 8px 8px; }
.winbtns button { width: 61px; border-right: 1px solid #aaa99b; }
.winbtns button.x { width: 103px; border-right: 0; }

.tabs { height: 57px; display: flex; font-size: 23px; }
.tabs .file { width: 123px; color: #fff; border: 1px solid #1d6a22; border-radius: 6px 6px 0 0; background: radial-gradient(ellipse at 50% 100%, #5fc23c, #2c8a28 60%, #35922c); }
.tabs .home { width: 123px; margin: 0 2px 0 11px; background: #fff; border: 2px solid #b9bcc2; border-bottom: 0; border-radius: 6px 6px 0 0; color: #555; }
.tab { width: 116px; font-size: 26px; color: #444; }
.tab.kana { font-size: 24px; }
.tab.wide { width: 236px; }
.tab.data { width: 122px; }
.docbtns { margin-left: auto; display: grid; grid-template-columns: repeat(5, 49px); }

.ribbon { display: flex; height: 202px; border-top: 2px solid #b4b7bd; border-bottom: 2px solid #8f939b; background: linear-gradient(#fff 0 50%, #f7f8fa 70%, #e8eaee); font-size: 26px; }
.group { border-right: 2px solid #c4c7cc; display: flex; flex-direction: column; padding: 5px 0 0 11px; flex: none; }
.group footer { height: 40px; display: flex; align-items: center; color: #6d727c; font-size: 26px; margin-top: auto; margin-left: -11px; padding-right: 11px; }
.group footer.kana { font-size: 23px; }
.group footer span { flex: 1; text-align: center; }
.row { height: 51px; display: flex; align-items: center; }
.cell { width: 51px; height: 48px; flex: none; }
.drop { width: 20px; height: 48px; flex: none; }
.sep { width: 2px; height: 42px; flex: none; margin: 0 10px; background: linear-gradient(#fff, #c4c7cc, #fff); }
.font .sep { margin: 0 13px; }
.clip { width: 192px; }
.clipbody { display: flex; height: 153px; margin-left: -11px; }
.big { width: 118px; flex-direction: column; gap: 11px; font-size: 25px; justify-content: flex-start; padding-top: 6px; }
.stack { display: flex; flex-direction: column; align-items: flex-start; }
.stack button { height: 51px; gap: 12px; min-width: 38px; }
.font { width: 364px; }
.combo { display: flex; align-items: center; height: 50px; border: 2px solid #d0d3d8; background: #fff; padding: 0 9px 0 7px; color: #111; font-size: 26px; }
.combo select { appearance: none; flex: 1; min-width: 0; height: 100%; }
.fname { width: 238px; }
.fsize { width: 105px; }
.nfmt { width: 176px; font-weight: 500; padding-left: 4px; }
.serif { font-family: "Liberation Serif", serif; font-size: 31px; color: #222; font-weight: 700; }
.align { width: 251px; padding-left: 12px; }
.align .cell.mid { margin-left: 5px; }
.cell.on { border: 2px solid #c89a3a; border-radius: 5px; background: linear-gradient(#f7d678, #fbe078 50%, #fde46e); }
.number { width: 198px; padding-left: 12px; }
.pct { font: 27px "Noto Sans", sans-serif; padding-left: 6px; }
.comma { font: 700 38px/20px "Liberation Serif", serif; padding: 0 0 18px 8px; }
.list > button { height: 49px; justify-content: flex-start; gap: 8px; }
.list > button.kana { font-size: 24px; }
.list .dn { margin-left: 6px; }
.list, .edit { padding-top: 2px; padding-left: 17px; }
.list footer, .edit footer { margin-left: -17px; padding-right: 0; }
.styles { width: 348px; }
.cellsg { width: 153px; }
.edit { width: 311px; }
.editbody { display: flex; }
.small { width: 68px; }
.small button { height: 49px; gap: 10px; padding-left: 2px; }
.small .sigma { font: 700 30px "Liberation Serif", serif; color: #111; gap: 18px; padding-left: 8px; }
.tall { flex-direction: column; width: 128px; padding-top: 8px; justify-content: flex-start; font-size: 24px; }
.tall + .tall { width: 76px; }
.tall span { height: 34px; line-height: 34px; align-self: flex-start; }
.tall svg { margin-bottom: 10px; }
.tall .dn { vertical-align: middle; }

.formulabar { display: flex; align-items: center; height: 61px; padding: 10px 0 11px; background: linear-gradient(#d3d6dc 0 8px, #9a9da5 8px 10px, #dfe1e8 10px 50px, #9a9da5 50px 52px, #f0f1fa 52px 58px, #8e929c 59px); color: #222; }
.namebox { width: 350px; height: 40px; padding-bottom: 3px; background: #fff; text-align: center; }
.formulabar > .dn { width: 44px; height: 40px; border: 0; background: #fff; display: flex; align-items: center; justify-content: center; }
.formulabar > .dn::after { content: ""; border: 8px solid transparent; border-bottom: 0; border-top: 9px solid #333; }
.fx { width: 172px; height: 40px; display: flex; align-items: center; justify-content: space-between; border: 2px solid #a9adb5; border-width: 0 2px; border-radius: 20px 0 0 20px; padding: 0 11px 0 8px; background: #e1e3e9; }
.fx .knob { width: 18px; height: 16px; border-radius: 8px; background: linear-gradient(#c2c5cb, #fff); }
.fx button { font: 700 32px/36px "Liberation Serif", serif; align-items: baseline; }
.fx .sub { font-size: 24px; }
.formula { flex: 1; min-width: 0; height: 40px; background: #fff; }
.expand { width: 35px; height: 40px; border: 2px solid #c0c3ca; background: #e8eaee; }

.sheet { flex: 1; min-height: 0; display: flex; }
.canvas { flex: 1; min-width: 0; position: relative; overflow: hidden; background: #fff; }
table { table-layout: fixed; border-collapse: separate; border-spacing: 0; width: 1957px; }
.wr { width: 56px; } .wA { width: 47px; } .wB { width: 135px; } .wC { width: 196px; } .wD { width: 82px; } .wE { width: 246px; } .wF { width: 247px; }
.wG, .wI, .wK, .wM { width: 135px; }
.wH, .wJ, .wL { width: 136px; }
tr { height: 33px; }
tbody tr:nth-child(3n) { height: 34px; }
th { font-weight: 400; font-size: 23px; color: #333; background: #dfe2ea; border: solid #a9adb6; border-width: 0 2px 2px 0; padding: 0; }
thead th { background: #e1e2ea; height: 33px; }
.corner svg { margin: 0 6px 0 auto; }
td { padding: 0; border: solid #d9dbdf; border-width: 0 2px 2px 0; color: #000; height: 33px; }
td.rk { border-right-color: #000; } td.rg { border-right-color: #9cba58; }
td.bk { border-bottom-color: #000; } td.bg { border-bottom-color: #9cba58; }
td.band { background: #ebf1de; }
td.title { background: #76933c; color: #fff; font-weight: 700; font-size: 28px; }
.tx, .nm, .hd { height: 31px; display: flex; align-items: center; white-space: nowrap; padding: 1px 5px 0 4px; line-height: 28px; }
.bold { font-weight: 700; }
.nm { position: relative; justify-content: flex-end; font-size: 23px; }
.nm.bold { font-size: 26px; }
.tx.bold { font-size: 28px; }
.nm svg { position: absolute; left: 2px; top: 2px; }
.nm span { position: relative; }
.bar { position: absolute; left: 2px; top: 3px; height: 23px; max-width: calc(100% - 4px); border: 1px solid #63c384; background: linear-gradient(90deg, #63c384, #e4f5ea); }
.end { position: absolute; right: 0; bottom: 0; width: 9px; height: 9px; background: #4657a6; clip-path: polygon(50% 0, 100% 0, 100% 100%, 0 100%, 0 50%, 50% 50%); }
.hd { padding-right: 2px; justify-content: space-between; font-size: 28px; }
.hd button { width: 32px; height: 31px; margin-top: -1px; border: 2px solid #c3c7cf; background: linear-gradient(#fff, #e9ecf2); }

.chart { position: absolute; left: 1045px; top: 133px; width: 803px; height: 584px; margin: 0; border: 2px solid #8a8783; background: linear-gradient(135deg, #fcebdb 30%, #ffe6da 65%); color: #000; display: flex; flex-direction: column; }
figcaption { text-align: center; font-size: 46px; line-height: 50px; padding: 18px 0 20px; }
.chart ul { list-style: none; margin: 48px 0 0 106px; padding: 0; display: grid; grid-template-columns: 128px 131px 118px 151px auto; font-size: 22px; line-height: 30px; }
.chart li { display: flex; align-items: center; gap: 4px; white-space: nowrap; }
.chart li i { width: 15px; height: 18px; border: 2px solid #b76e32; margin-top: 6px; }

.vscroll { width: 36px; display: flex; flex-direction: column; background: #dce1ea; padding-left: 1px; }
.vscroll .split { height: 16px; border: 2px solid #777b86; background: linear-gradient(#555, #555) center / 16px 2px no-repeat #fff; }
.vscroll button { height: 38px; }
.up { border: 10px solid transparent; border-top: 0; border-bottom: 10px solid #3c3f47; }
.down { border: 10px solid transparent; border-bottom: 0; border-top: 12px solid #3c3f47; }
.vthumb { flex: 861; border: 2px solid #868b97; border-radius: 2px; background: linear-gradient(90deg, #f3f4f8, #e0e3e9); display: flex; align-items: center; justify-content: center; }
.vthumb i { width: 18px; height: 17px; background: repeating-linear-gradient(#777b86 0 2px, #f4f5f8 2px 5px); }
.vtrack { flex: 35; }

.sheetbar { height: 36px; display: flex; background: #dde1e6; border-top: 2px solid #9a9ea7; border-bottom: 2px solid #83878f; }
.nav { width: 139px; display: flex; justify-content: space-around; border-right: 2px solid #9a9ea7; padding: 0 6px; background: #dfe2ea; }
.stab { padding: 0 6px 2px 0; font-size: 25px; color: #333; }
.stab.active { padding: 0 0 2px 18px; background: #fdfdfe; }
.stab { background: #e6e9ee; }
.hscroll { margin-left: auto; width: 767px; display: flex; background: #d6dbe8; }
.hsplit { width: 17px; border: 2px solid #777b86; background: linear-gradient(#555, #555) center / 2px 16px no-repeat #fff; }
.hscroll button { width: 39px; }
.left { border: 10px solid transparent; border-left: 0; border-right: 11px solid #3c3f47; }
.right { border: 10px solid transparent; border-right: 0; border-left: 11px solid #3c3f47; }
.hthumb { flex: 522; border: 2px solid #868b97; border-top-width: 1px; border-radius: 3px; background: linear-gradient(#f3f4f8, #e4e6ec); display: flex; align-items: center; justify-content: center; }
.hthumb i { width: 17px; height: 16px; background: repeating-linear-gradient(90deg, #777b86 0 2px, #f4f5f8 2px 5px); }
.htrack { flex: 133; }
.hcorner { width: 36px; background: #dfe4e7; }

.status { height: 50px; display: flex; align-items: center; background: linear-gradient(#f1f2f6, #d6d8de 35%, #b9bcc5); border-bottom: 2px solid #55585e; color: #444; }
.mode { padding: 0 20px 0 16px; line-height: 46px; border-right: 2px solid #8f929b; font-size: 23px; }
.views { margin-left: auto; display: flex; align-items: center; gap: 4px; padding-left: 9px; height: 46px; border-left: 2px solid #a3a6ae; }
.views button { height: 28px; width: 36px; }
.views .on { width: 42px; height: 42px; border: 2px solid #d09a2c; border-radius: 5px; background: #fcdc70; }
.zoom { font: 28px "Noto Sans", sans-serif; margin: 0 17px 0 25px; }
.status input { appearance: none; width: 222px; height: 36px; background: linear-gradient(#7d818b, #7d818b) center / 100% 2px no-repeat, linear-gradient(#7d818b, #7d818b) center / 2px 16px no-repeat; }
.status input::-webkit-slider-thumb { appearance: none; width: 20px; height: 28px; background: linear-gradient(#fff, #eceef2); border: 2px solid #7d818b; border-radius: 2px 2px 10px 10px; }
.status > svg { margin: 10px 0 0 17px; }

.behind { height: 37px; margin: 0 190px 0 592px; display: flex; overflow: hidden; font: 700 34px/22px "Liberation Serif", serif; color: #3b4a5c; }
.edge { width: 12px; flex: none; background: linear-gradient(90deg, #3a4c96 0 4px, #b7cdf0 4px); }
.rowhead { width: 80px; flex: none; background: #e0ebf9; display: flex; flex-direction: column; }
.rowhead span:first-child { height: 22px; display: flex; align-items: flex-end; justify-content: center; border-bottom: 2px solid #92b2cc; }
.backgrid { flex: 1; min-width: 0; border-left: 2px solid #a9bfd8; display: flex; flex-direction: column; }
.lines { height: 20px; display: flex; }
.lines i { width: 272px; flex: none; border-right: 2px solid #d2d5e6; }
.lines i:nth-child(n + 2) { width: 308px; }
.lines i:last-child { border: 0; }
.pink { flex: 1; background: #f0dcde; }
</style>
